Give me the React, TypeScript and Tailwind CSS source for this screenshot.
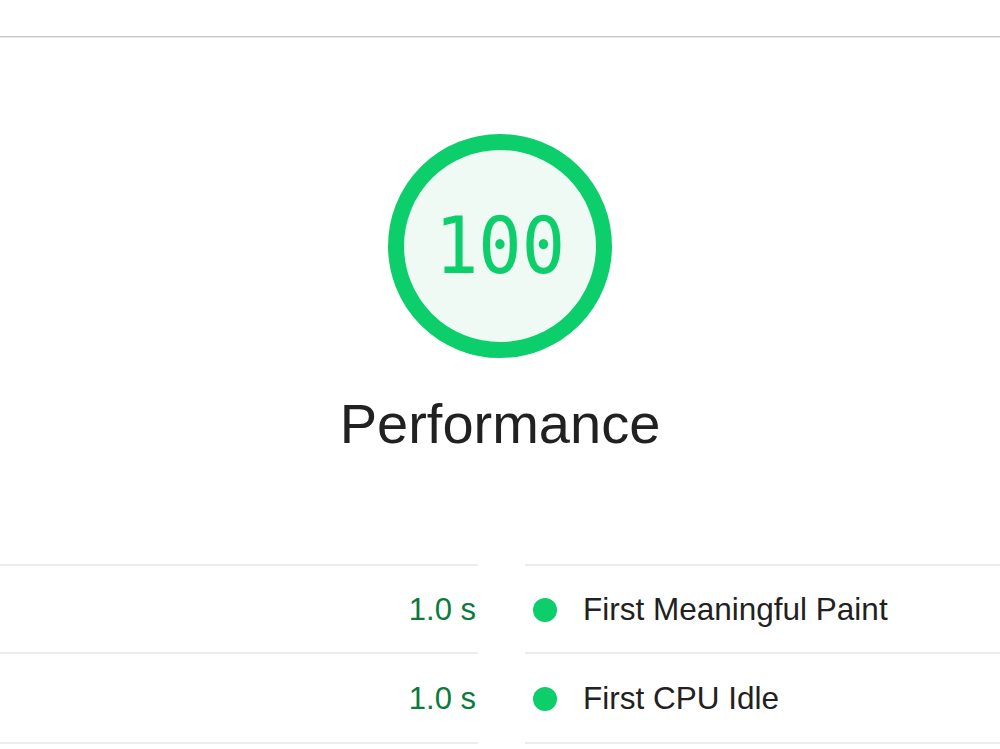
import React from "react";

const rows = [
  { value: "1.0 s", label: "First Meaningful Paint" },
  { value: "1.0 s", label: "First CPU Idle" },
];

export default function App() {
  return (
    <div className="w-[1000px] h-[749px] overflow-hidden bg-white" style={{ fontFamily: '"Liberation Sans", Arial, sans-serif' }}>
      <div className="h-[36px]" />
      <div className="h-px bg-[#c4caca]" />
      <div className="h-px bg-[#e6eaea]" />
      <div className="flex flex-col items-center pt-[96px]">
        <div className="w-[224px] h-[224px] rounded-full border-[16px] border-[#0cce6b] bg-[#eefaf3] flex items-center justify-center">
          <span
            className="text-[72px] leading-none text-[#0cce6b] scale-y-[1.08] slashed-zero"
            style={{ fontFamily: '"DejaVu Sans Mono", monospace' }}
          >
            100
          </span>
        </div>
        <div className="mt-[38px] text-[56px] leading-[56px] text-[#212121]">Performance</div>
      </div>
      <div className="mt-[112px] grid grid-cols-[478px_1fr] gap-x-[47px]">
        {rows.map((r, i) => (
          <React.Fragment key={i}>
            <div
              className={`h-[90px] border-b-2 border-[#ececec] flex items-center justify-end pr-[2px] pt-[2px] text-[31px] text-[#0b7a3e] ${i === 0 ? "border-t-2" : ""}`}
            >
              {r.value}
            </div>
            <div
              className={`h-[90px] border-b-2 border-[#ececec] flex items-center pl-[8px] pt-[2px] text-[31.5px] text-[#212121] ${i === 0 ? "border-t-2" : ""}`}
            >
              <span className="w-[24px] h-[24px] rounded-full bg-[#0cce6b] shrink-0" />
              <span className="ml-[26px]">{r.label}</span>
            </div>
          </React.Fragment>
        ))}
      </div>
    </div>
  );
}
